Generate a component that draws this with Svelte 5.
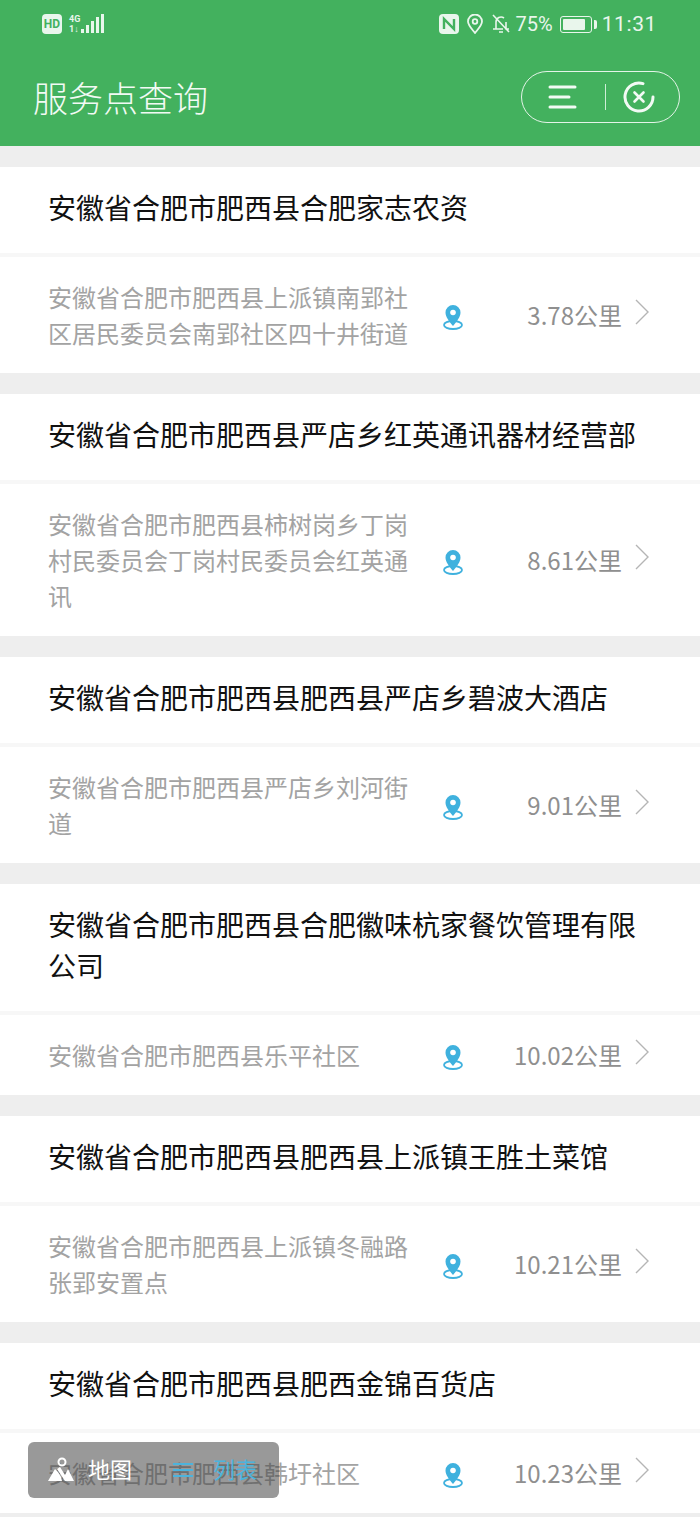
<script>
	const points = [
		{ name: '安徽省合肥市肥西县合肥家志农资', address: '安徽省合肥市肥西县上派镇南郢社区居民委员会南郢社区四十井街道', distance: '3.78公里' },
		{ name: '安徽省合肥市肥西县严店乡红英通讯器材经营部', address: '安徽省合肥市肥西县柿树岗乡丁岗村民委员会丁岗村民委员会红英通讯', distance: '8.61公里' },
		{ name: '安徽省合肥市肥西县肥西县严店乡碧波大酒店', address: '安徽省合肥市肥西县严店乡刘河街道', distance: '9.01公里' },
		{ name: '安徽省合肥市肥西县合肥徽味杭家餐饮管理有限公司', address: '安徽省合肥市肥西县乐平社区', distance: '10.02公里' },
		{ name: '安徽省合肥市肥西县肥西县上派镇王胜土菜馆', address: '安徽省合肥市肥西县上派镇冬融路张郢安置点', distance: '10.21公里' },
		{ name: '安徽省合肥市肥西县肥西金锦百货店', address: '安徽省合肥市肥西县韩圩社区', distance: '10.23公里' }
	];
</script>

<div class="page">
	<header class="top">
		<div class="status">
			<div class="status-left">
				<span class="hd">HD</span>
				<span class="net"><span>4G</span><span>1↓</span></span>
				<svg width="24" height="20" viewBox="0 0 24 20" fill="#e9f6ec">
					<rect x="0" y="15" width="3" height="4" />
					<rect x="5" y="11" width="3" height="8" />
					<rect x="10" y="7" width="3" height="12" />
					<rect x="15" y="3" width="3" height="16" />
					<rect x="20" y="0" width="3" height="19" />
				</svg>
			</div>
			<div class="status-right">
				<svg width="20" height="20" viewBox="0 0 20 20">
					<rect x="0" y="0" width="20" height="20" rx="4" fill="#e9f6ec" />
					<path d="M5 15V5l10 10V5" fill="none" stroke="#43b15e" stroke-width="2.4" />
				</svg>
				<svg width="16" height="20" viewBox="0 0 16 20" fill="none" stroke="#e9f6ec" stroke-width="1.8">
					<path d="M8 19C4 14 1 11 1 7.500a7 7 0 0 1 14 0C15 11 12 14 8 19z" />
					<circle cx="8" cy="7.500" r="2.300" />
				</svg>
				<svg width="20" height="20" viewBox="0 0 20 20" fill="none" stroke="#e9f6ec" stroke-width="1.600">
					<path d="M5 15V8a5 5 0 0 1 8-4M15 8v7h3M2 15h10M8 18h4M2 1l16 17" />
				</svg>
				<span class="pct">75%</span>
				<span class="battery"><i></i></span>
				<span class="time">11:31</span>
			</div>
		</div>
		<div class="title-bar">
			<h1>服务点查询</h1>
			<div class="capsule">
				<svg width="29" height="24" viewBox="0 0 29 24" fill="none" stroke="#f2faf4" stroke-width="3" stroke-linecap="round">
					<path d="M2 2h25M2 12h19M2 22h25" />
				</svg>
				<span class="sep"></span>
				<svg width="32" height="32" viewBox="0 0 32 32" fill="none" stroke="#f2faf4" stroke-linecap="round">
					<path d="M30 16A14 14 0 1 1 20 2.600" stroke-width="3" />
					<path d="M11.500 11.500l9 9M20.500 11.500l-9 9" stroke-width="2.600" />
				</svg>
			</div>
		</div>
	</header>

	<main class="list">
		{#each points as point}
			<article class="card">
				<h2>{point.name}</h2>
				<div class="detail">
					<p>{point.address}</p>
					<svg class="pin" width="20" height="26" viewBox="0 0 20 26">
						<ellipse cx="10" cy="21" r="9" rx="9" ry="4" fill="none" stroke="#3fb1de" stroke-width="1.800" />
						<path d="M10 22C6 17 2.500 13 2.500 8.500a7.500 7.500 0 0 1 15 0C17.500 13 14 17 10 22z" fill="#3fb1de" />
						<circle cx="10" cy="8.500" r="2.800" fill="#fff" />
					</svg>
					<span class="distance">{point.distance}</span>
					<svg class="chevron" width="16" height="26" viewBox="0 0 16 26" fill="none" stroke="#b5b5b5" stroke-width="1.400">
						<path d="M2 1l12 12L2 25" />
					</svg>
				</div>
			</article>
		{/each}
	</main>

	<div class="switch">
		<svg width="26" height="26" viewBox="0 0 26 26" fill="#fff">
			<path d="M0 24L7 12l3 3 3 5 1 4zM9 12l3-2 5 8 3-6 6 12h-9z" />
			<circle cx="14" cy="5" r="3.500" fill="none" stroke="#fff" stroke-width="2" />
		</svg>
		<span class="map-label">地图</span>
		<svg class="list-icon" width="20" height="16" viewBox="0 0 20 16" fill="none" stroke="#4cb3dc" stroke-width="2">
			<path d="M0 2h20M0 8h20M0 14h20" />
		</svg>
		<span class="list-label">列表</span>
	</div>
</div>

<style>
	:global(body) {
		margin: 0;
		background: #eeeeee;
	}

	.page {
		position: relative;
		width: 700px;
		height: 1517px;
		overflow: hidden;
		background: #eeeeee;
		font-family: "Noto Sans CJK SC", "Liberation Sans", sans-serif;
	}

	.top {
		height: 146px;
		background: #43b15e;
		color: #f2faf4;
	}

	.status {
		display: flex;
		justify-content: space-between;
		align-items: center;
		height: 50px;
		padding: 0 43px 2px 42px;
		box-sizing: border-box;
		font-family: Roboto, sans-serif;
	}

	.status-left,
	.status-right {
		display: flex;
		align-items: center;
	}

	.hd {
		width: 20px;
		height: 20px;
		border-radius: 4px;
		background: #e9f6ec;
		color: #43b15e;
		font-size: 12px;
		font-weight: 700;
		line-height: 20px;
		text-align: center;
	}

	.net {
		display: flex;
		flex-direction: column;
		margin: 0 1px 0 7px;
		color: #e9f6ec;
		font-size: 9px;
		font-weight: 700;
		line-height: 10px;
	}

	.status-right svg {
		margin-right: 8px;
	}

	.pct {
		font-size: 20px;
		margin: 0 7px 0 -3px;
		color: #e9f6ec;
	}

	.battery {
		position: relative;
		width: 32px;
		height: 17px;
		border: 1px solid #e9f6ec;
		border-radius: 3px;
		padding: 2px;
		box-sizing: border-box;
		margin-right: 10px;
	}

	.battery i {
		display: block;
		width: 22px;
		height: 11px;
		background: #e9f6ec;
		border-radius: 1px;
	}

	.battery::after {
		content: '';
		position: absolute;
		right: -6px;
		top: 3px;
		width: 3px;
		height: 9px;
		background: #e9f6ec;
		border-radius: 0 2px 2px 0;
	}

	.time {
		font-size: 21px;
		letter-spacing: 0.6px;
		color: #e9f6ec;
	}

	.title-bar {
		display: flex;
		justify-content: space-between;
		align-items: center;
		height: 96px;
		padding: 0 20px 0 33px;
		box-sizing: border-box;
	}

	h1 {
		margin: 0 0 2px;
		font-size: 35px;
		font-weight: 300;
		line-height: 50px;
	}

	.capsule {
		display: flex;
		align-items: center;
		justify-content: space-between;
		width: 159px;
		height: 52px;
		padding: 0 24px 0 26px;
		box-sizing: border-box;
		border: 1px solid #e4f4e8;
		border-radius: 26px;
		margin-bottom: 2px;
	}

	.sep {
		width: 1px;
		height: 26px;
		background: #cfeed7;
		margin-left: 10px;
	}

	.list {
		display: flex;
		flex-direction: column;
		gap: 21px;
		padding-top: 21px;
	}

	.card {
		background: #fff;
	}

	h2 {
		margin: 0;
		padding: 20px 48px 25px;
		font-size: 28px;
		font-weight: 400;
		line-height: 41px;
		color: #111;
		border-bottom: 4px solid #f7f7f7;
	}

	.detail {
		display: flex;
		align-items: center;
		padding: 22px 50px 22px 48px;
	}

	.detail p {
		width: 360px;
		margin: 0;
		font-size: 24px;
		line-height: 36px;
		color: #a3a3a3;
	}

	.pin {
		margin: 4px 0 0 35px;
		flex: none;
	}

	.distance {
		margin-left: auto;
		font-size: 24px;
		line-height: 36px;
		color: #8f8f8f;
	}

	.chevron {
		margin: -6px 0 0 12px;
		flex: none;
	}

	.switch {
		position: absolute;
		left: 28px;
		top: 1442px;
		width: 251px;
		height: 56px;
		display: flex;
		align-items: center;
		padding-left: 20px;
		box-sizing: border-box;
		border-radius: 6px;
		background: rgba(70, 70, 70, 0.55);
	}

	.map-label {
		margin-left: 14px;
		font-size: 22px;
		color: #fff;
		line-height: 30px;
		margin-bottom: 4px;
	}

	.list-icon {
		margin-left: 41px;
	}

	.list-label {
		margin-left: 20px;
		font-size: 22px;
		color: #4cb3dc;
		line-height: 30px;
		margin-bottom: 4px;
	}
</style>
